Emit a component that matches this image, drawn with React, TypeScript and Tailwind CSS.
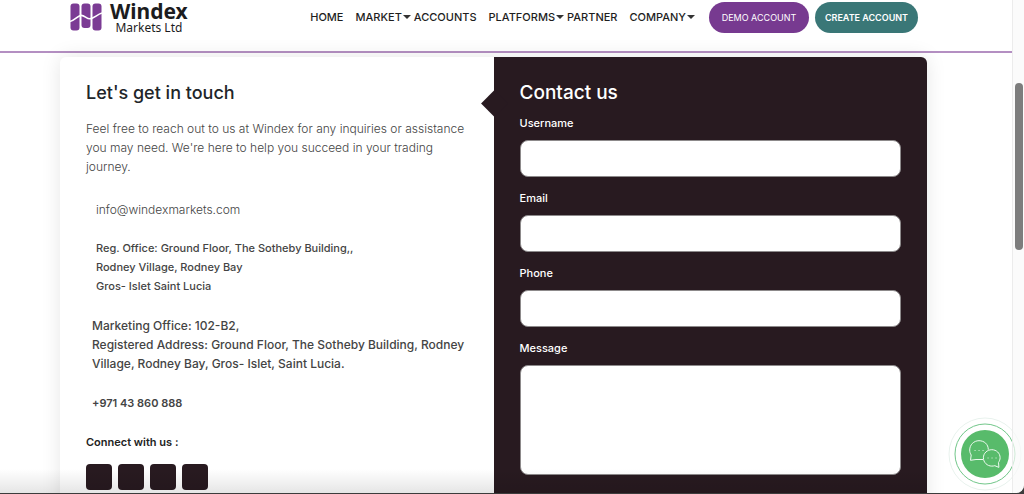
import React from "react";

const navLinks = [
  { label: "HOME", menu: false },
  { label: "MARKET", menu: true },
  { label: "ACCOUNTS", menu: false },
  { label: "PLATFORMS", menu: true },
  { label: "PARTNER", menu: false },
  { label: "COMPANY", menu: true },
];

const fields = [
  { id: "username", label: "Username", type: "text" },
  { id: "email", label: "Email", type: "email" },
  { id: "phone", label: "Phone", type: "tel" },
];

const socials = ["Facebook", "Twitter", "Instagram", "LinkedIn"];

function Logo() {
  return (
    <a href="#" className="flex items-start gap-2 text-[#1c1c1e]">
      <svg viewBox="0 0 32 28" className="mt-[3px] h-7 w-8">
        <g fill="#7b3b94">
          <rect x="0.5" y="0.5" width="9" height="27" rx="3" />
          <rect x="11.5" y="0.5" width="9" height="24.5" rx="3" />
          <rect x="22.5" y="0.5" width="9" height="27" rx="3" />
        </g>
        <path
          d="M0 18.500C4 17.500 7 13.500 10.500 12.500c3.500-1 6 3.500 9.500 3.300C24 15.500 27 11.500 32 10"
          fill="none"
          stroke="#fff"
          strokeWidth="1.600"
        />
      </svg>
      <span className="flex flex-col items-center font-['Noto_Sans']">
        <span className="text-[21px] leading-[22px] font-bold">Windex</span>
        <span className="text-[12px] leading-3">Markets Ltd</span>
      </span>
    </a>
  );
}

function Header() {
  return (
    <header className="flex h-[53px] items-start justify-between border-b-2 border-[#b48fc2] pr-[94px] pl-[70px]">
      <Logo />
      <div className="flex items-start pt-[2px]">
        <nav className="mr-[11px] flex pt-[7px] text-[11px] leading-4 font-medium text-[#1e1e1e]">
          {navLinks.map((link) => (
            <a key={link.label} href="#" className="flex items-center">
              {link.label}
              <span className="flex w-3 pl-px">
                {link.menu && (
                  <svg viewBox="0 0 8 4" className="h-1 w-2 fill-[#333]">
                    <path d="M0 0h8L4 4z" />
                  </svg>
                )}
              </span>
            </a>
          ))}
        </nav>
        <button className="h-[31px] w-[100px] rounded-full bg-[#773a90] text-[9px] text-white">
          DEMO ACCOUNT
        </button>
        <button className="ml-[6px] h-[31px] w-[103px] rounded-full bg-[#3a7777] text-[9px] font-semibold text-white">
          CREATE ACCOUNT
        </button>
      </div>
    </header>
  );
}

function ContactInfo() {
  return (
    <section className="flex-1 p-[26px] text-[12px] leading-[19px] text-[#444]">
      <h2 className="mb-4 text-[18px] leading-5 font-medium text-[#212529]">Let's get in touch</h2>
      <p className="font-light whitespace-nowrap">
        Feel free to reach out to us at Windex for any inquiries or assistance
        <br />
        you may need. We're here to help you succeed in your trading
        <br />
        journey.
      </p>
      <a href="mailto:info@windexmarkets.com" className="mt-6 ml-[10px] block font-light">
        info@windexmarkets.com
      </a>
      <address className="mt-5 ml-[10px] text-[11px] font-medium not-italic">
        Reg. Office: Ground Floor, The Sotheby Building,,
        <br />
        Rodney Village, Rodney Bay
        <br />
        Gros- Islet Saint Lucia
      </address>
      <address className="mt-5 ml-[6px] font-medium whitespace-nowrap not-italic">
        Marketing Office: 102-B2,
        <br />
        Registered Address: Ground Floor, The Sotheby Building, Rodney
        <br />
        Village, Rodney Bay, Gros- Islet, Saint Lucia.
      </address>
      <a href="tel:+97143860888" className="mt-[21px] ml-[6px] block text-[11px] font-semibold">
        +971 43 860 888
      </a>
      <p className="mt-5 text-[11px] font-semibold text-[#222]">Connect with us :</p>
      <div className="mt-3 flex gap-[6px]">
        {socials.map((name) => (
          <a key={name} href="#" aria-label={name} className="size-[26px] rounded bg-[#281a20]" />
        ))}
      </div>
    </section>
  );
}

function ContactForm() {
  return (
    <form className="relative flex-1 rounded-r-md bg-[#281a20] p-[26px] text-[11px] leading-[19px] font-medium text-white">
      {/* arrow pointing back at the contact details */}
      <span className="absolute top-[37px] -left-[9px] size-[19px] rotate-45 bg-[#281a20]" />
      <h2 className="mb-[11px] text-[19px] leading-5 font-medium">Contact us</h2>
      {fields.map((field) => (
        <div key={field.id} className="mb-3">
          <label htmlFor={field.id} className="mb-[7px] block">
            {field.label}
          </label>
          <input
            id={field.id}
            type={field.type}
            className="block h-[37px] w-full rounded-lg border border-[#8d8a8b] bg-white px-3 text-black"
          />
        </div>
      ))}
      <label htmlFor="message" className="mb-[7px] block">
        Message
      </label>
      <textarea
        id="message"
        className="block h-[110px] w-full resize-none rounded-lg border border-[#8d8a8b] bg-white p-3 text-black"
      />
    </form>
  );
}

function ChatButton() {
  return (
    <button aria-label="Chat" className="absolute right-[2px] bottom-[2px] size-[74px]">
      <svg viewBox="0 0 74 74" fill="none">
        <circle cx="37" cy="37" r="36" fill="#fff" stroke="#e8f2ed" />
        <circle cx="37" cy="37" r="30" stroke="#72c78a" />
        <circle cx="37" cy="37" r="24" fill="#58bb6b" />
        <g stroke="#effaf1" strokeLinejoin="round">
          <path d="M35 42.500h-7l-5.500.8.700-5.300c-1-1.500-1.500-3.200-1.500-5 0-5.200 4.100-9.300 9.300-9.300 5.200 0 9.300 3.500 9.300 9" />
          <path d="M43.800 32.700c4.600 0 8.300 3.500 8.300 8 0 1.800-.6 3.400-1.600 4.700l.4 5-4.100-1.700c-1 .3-2 .4-3 .4-4.600 0-8.400-3.700-8.400-8.300s3.800-8.100 8.400-8.100z" />
          <path
            d="M27 33.500h.1M31 33.500h.1M35 33.500h.1M40 41h.1M44 41h.1M48 41h.1"
            strokeLinecap="round"
          />
        </g>
      </svg>
    </button>
  );
}

export default function App() {
  return (
    <div className="h-screen bg-[#3c3c3c] pb-px font-['Inter',sans-serif]">
      <div className="relative flex h-full overflow-hidden rounded-br-lg bg-white">
        <main className="min-w-0 flex-1">
          <Header />
          <div className="pt-1 pr-[85px] pl-[60px]">
            <div className="flex min-h-screen rounded-md bg-white shadow-[0_0_20px_rgba(0,0,0,0.1)]">
              <ContactInfo />
              <ContactForm />
            </div>
          </div>
        </main>

        <ChatButton />

        {/* scroll track */}
        <aside className="relative flex w-3 justify-center border-l border-[#ececec] bg-[#fafafa]/70 pt-[83px]">
          <span className="h-[167px] w-2 rounded-full bg-[#7d7d7d]" />
        </aside>

        <div className="pointer-events-none absolute right-[97px] bottom-0 left-0 h-6 bg-linear-to-b from-transparent to-black/10" />
      </div>
    </div>
  );
}
